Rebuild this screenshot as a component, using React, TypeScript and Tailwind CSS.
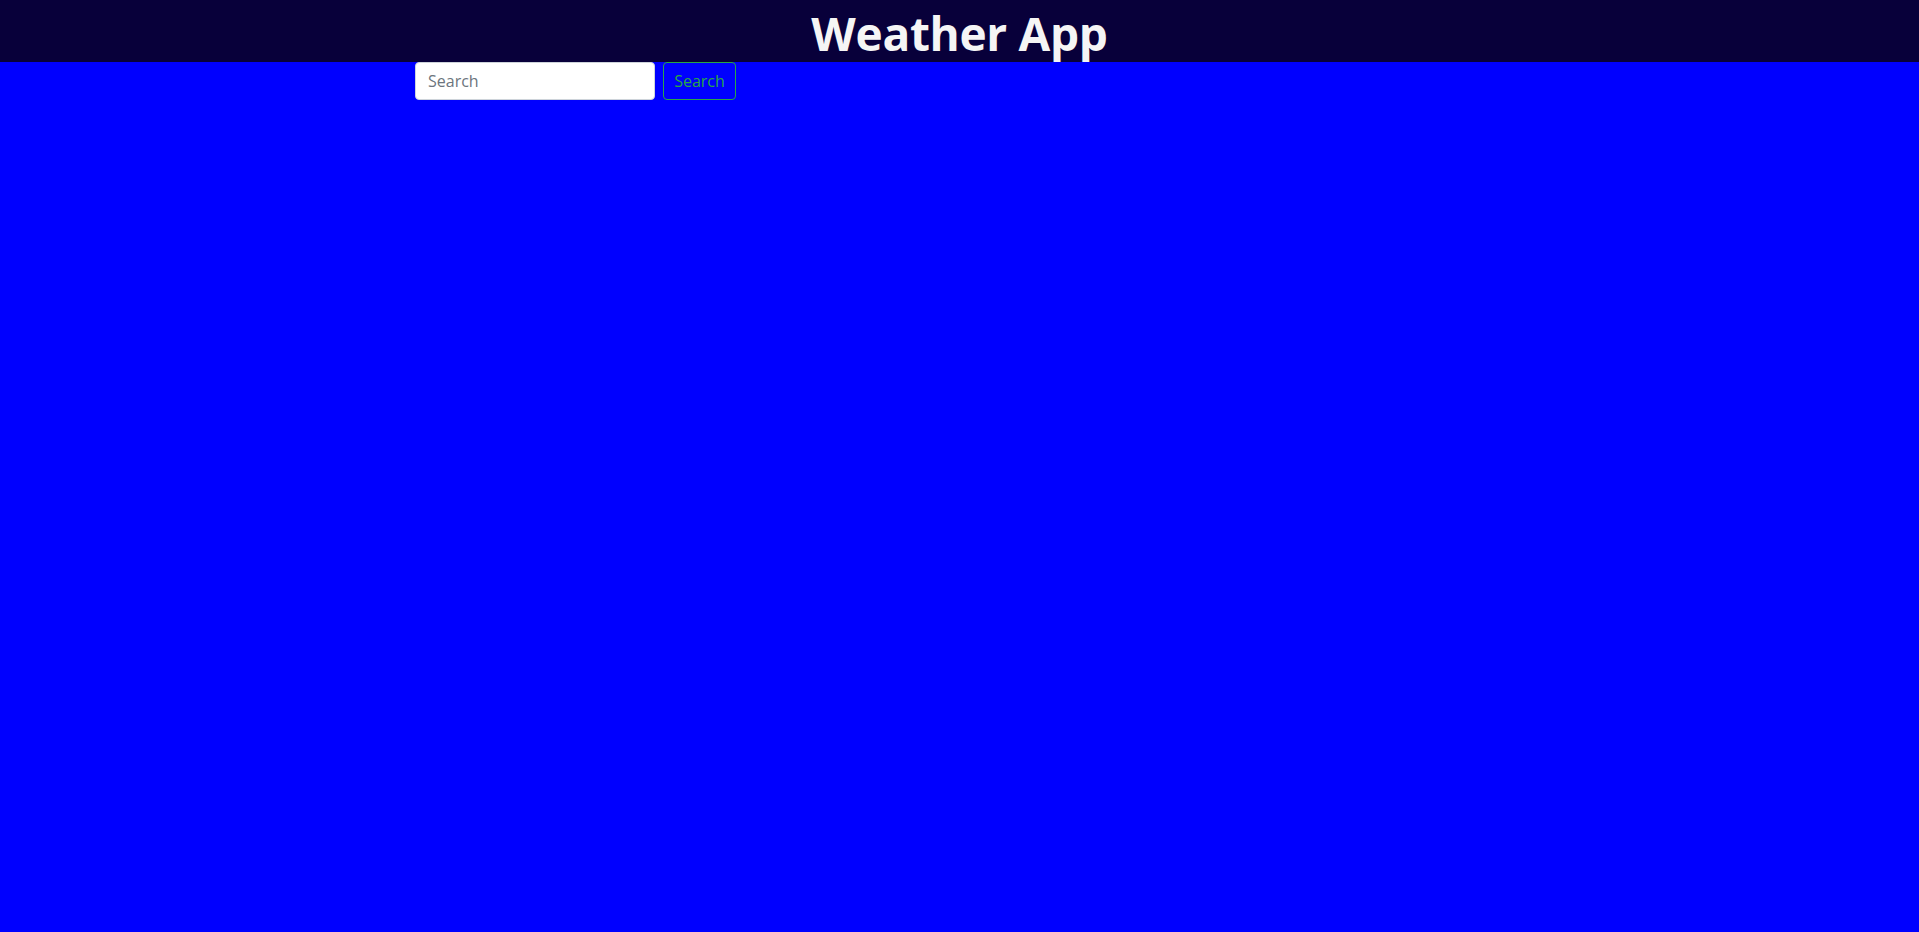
// Weather App - header with search bar on a blue page
export default function App() {
  return (
    <div className="min-h-[932px] bg-[#0000ff]" style={{ fontFamily: '"Open Sans", "Noto Sans", sans-serif' }}>
      <header className="h-[62px] bg-[#08003a] flex items-center justify-center pt-[4px]">
        <h1 className="text-[46px] font-bold text-[#f5f5f5] leading-[46px] tracking-[-0.3px]">Weather App</h1>
      </header>

      <div className="w-[1089px] mx-auto flex gap-2">
        <input
          type="text"
          placeholder="Search"
          className="w-[240px] h-[38px] bg-white rounded-[4px] border border-[#ced4da] px-3 text-[16px] text-[#212529] placeholder:text-[#6c757d] outline-none"
        />
        <button className="h-[38px] w-[73px] rounded-[4px] border border-[#28a745] text-[#28a745] text-[16px]">
          Search
        </button>
      </div>
    </div>
  );
}
